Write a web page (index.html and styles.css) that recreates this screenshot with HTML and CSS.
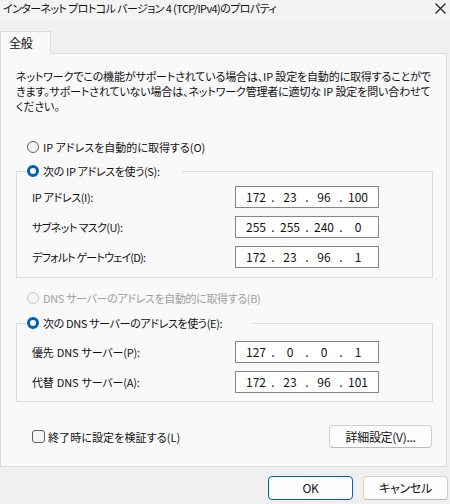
FILE: index.html
```html
<!DOCTYPE html>
<html lang="ja">
<head>
    <meta charset="UTF-8">
    <title>インターネット プロトコル バージョン 4 (TCP/IPv4)のプロパティ</title>
    <link rel="stylesheet" href="styles.css">
</head>
<body>
    <div class="titlebar">
        <span class="title">インターネット プロトコル バージョン 4 (TCP/IPv4)のプロパティ</span>
        <svg class="close" width="11" height="11" viewBox="0 0 11 11">
            <path d="M0.5 0.5 L10.5 10.5 M10.5 0.5 L0.5 10.5" stroke="#1a1a1a" stroke-width="1.1" fill="none"/>
        </svg>
    </div>

    <div class="tabs">
        <div class="tab">全般</div>
    </div>

    <div class="panel">
        <p class="desc">ネットワークでこの機能がサポートされている場合は、IP 設定を自動的に取得することがで<br>きます。サポートされていない場合は、ネットワーク管理者に適切な IP 設定を問い合わせて<br>ください。</p>

        <div class="radio row-auto-ip"><span class="dot"></span>IP アドレスを自動的に取得する(O)</div>

        <fieldset class="group group-ip">
            <legend class="legend-ip"><span class="radio"><span class="dot on"></span>次の IP アドレスを使う(S):</span></legend>
            <div class="field">
                <span>IP アドレス(I):</span>
                <div class="ipbox"><span class="seg">172</span><span class="sep">.</span><span class="seg">23</span><span class="sep">.</span><span class="seg">96</span><span class="sep">.</span><span class="seg">100</span></div>
            </div>
            <div class="field">
                <span class="tight">サブネット マスク(U):</span>
                <div class="ipbox"><span class="seg">255</span><span class="sep">.</span><span class="seg">255</span><span class="sep">.</span><span class="seg">240</span><span class="sep">.</span><span class="seg">0</span></div>
            </div>
            <div class="field">
                <span class="narrow">デフォルト ゲートウェイ(D):</span>
                <div class="ipbox"><span class="seg">172</span><span class="sep">.</span><span class="seg">23</span><span class="sep">.</span><span class="seg">96</span><span class="sep">.</span><span class="seg">1</span></div>
            </div>
        </fieldset>

        <div class="radio disabled row-auto-dns"><span class="dot"></span>DNS サーバーのアドレスを自動的に取得する(B)</div>

        <fieldset class="group group-dns">
            <legend class="legend-dns"><span class="radio"><span class="dot on"></span>次の DNS サーバーのアドレスを使う(E):</span></legend>
            <div class="field">
                <span class="dns-label">優先 DNS サーバー(P):</span>
                <div class="ipbox"><span class="seg">127</span><span class="sep">.</span><span class="seg">0</span><span class="sep">.</span><span class="seg">0</span><span class="sep">.</span><span class="seg">1</span></div>
            </div>
            <div class="field">
                <span class="dns-label">代替 DNS サーバー(A):</span>
                <div class="ipbox"><span class="seg">172</span><span class="sep">.</span><span class="seg">23</span><span class="sep">.</span><span class="seg">96</span><span class="sep">.</span><span class="seg">101</span></div>
            </div>
        </fieldset>

        <div class="footer-row">
            <label class="check"><span class="box"></span>終了時に設定を検証する(L)</label>
            <button class="btn btn-advanced">詳細設定(V)...</button>
        </div>
    </div>

    <div class="dialog-buttons">
        <button class="btn btn-dialog default">OK</button>
        <button class="btn btn-dialog">キャンセル</button>
    </div>
</body>
</html>
```

FILE: styles.css
```css
body {
    margin: 0;
    width: 450px;
    height: 504px;
    overflow: hidden;
    background: #f0f0f0;
    color: #111111;
    font-family: "Noto Sans CJK JP", "Noto Sans", sans-serif;
    font-size: 11px;
    line-height: 16px;
    letter-spacing: -0.35px;
    font-feature-settings: "palt";
}

.titlebar {
    height: 22px;
    display: flex;
    justify-content: space-between;
    align-items: flex-start;
    background: #f3f3f3;
}

.title {
    padding-left: 3px;
    letter-spacing: -0.6px;
}

.close {
    margin: 3px 4px 0 0;
}

.tabs {
    margin-top: 9px;
    display: flex;
}

.tab {
    position: relative;
    z-index: 1;
    box-sizing: border-box;
    width: 51px;
    height: 23px;
    margin-bottom: -1px;
    padding: 3px 0 0 8px;
    font-size: 12px;
    background: #f9f9f9;
    border: 1px solid #dcdcdc;
    border-bottom: none;
}

.panel {
    box-sizing: border-box;
    width: 447px;
    height: 414px;
    padding: 15px 0 0 15px;
    background: #f9f9f9;
    border: 1px solid #dcdcdc;
}

.desc {
    margin: 0;
    line-height: 15px;
    letter-spacing: -0.15px;
    white-space: nowrap;
}

.radio {
    display: flex;
    align-items: center;
    height: 16px;
}

.dot {
    box-sizing: border-box;
    width: 12px;
    height: 12px;
    margin-right: 4px;
    border: 1px solid #5f5f5f;
    border-radius: 50%;
    background: #f5f5f5;
}

.dot.on {
    border: 3.5px solid #005fb8;
    background: #ffffff;
}

.disabled {
    color: #a0a0a0;
}

.disabled .dot {
    border-color: #c4c4c4;
}

.row-auto-ip {
    margin: 25px 0 0 11px;
    letter-spacing: 0;
}

.row-auto-dns {
    margin: 12px 0 0 11px;
}

.tight {
    letter-spacing: -0.6px;
}

.narrow {
    letter-spacing: -0.8px;
}

.dns-label {
    letter-spacing: -0.2px;
    word-spacing: 1px;
}

.group {
    box-sizing: border-box;
    width: 417px;
    margin: 8px 0 0 0;
    padding: 7px 53px 9px 15px;
    border: 1px solid #dcdcdc;
    display: grid;
    row-gap: 8px;
}

.group-dns {
    margin-top: 9px;
    padding-top: 10px;
    padding-bottom: 8px;
}

.group legend {
    box-sizing: border-box;
    margin-left: -5px;
    padding: 0;
}

.legend-ip {
    width: 155px;
}

.legend-dns {
    width: 226px;
}

.field {
    display: flex;
    justify-content: space-between;
    align-items: center;
}

.ipbox {
    box-sizing: border-box;
    width: 144px;
    height: 22px;
    padding-left: 6px;
    display: flex;
    align-items: center;
    font-size: 12px;
    letter-spacing: 0;
    background: #ffffff;
    border: 1px solid #868686;
}

.seg {
    width: 28px;
    text-align: center;
}

.sep {
    width: 6px;
    text-align: center;
}

.footer-row {
    width: 417px;
    height: 23px;
    margin-top: 23px;
    display: flex;
    justify-content: space-between;
    align-items: center;
}

.check {
    display: flex;
    align-items: center;
    margin-left: 16px;
    letter-spacing: 0.1px;
}

.box {
    box-sizing: border-box;
    width: 13px;
    height: 13px;
    margin-right: 3px;
    border: 1px solid #5f5f5f;
    border-radius: 3px;
    background: #f5f5f5;
}

.btn {
    box-sizing: border-box;
    padding: 0;
    font: inherit;
    font-size: 12px;
    letter-spacing: -0.3px;
    color: #111111;
    background: #fdfdfd;
    border: 1px solid #d0d0d0;
    border-bottom-color: #bcbcbc;
    border-radius: 4px;
}

.btn-advanced {
    width: 103px;
    height: 23px;
    margin-right: 1px;
}

.dialog-buttons {
    margin-top: 9px;
    padding-right: 2px;
    display: flex;
    justify-content: flex-end;
    gap: 10px;
}

.btn-dialog {
    width: 85px;
    height: 24px;
}

.btn-dialog.default {
    border-color: #005fb8;
}
```
